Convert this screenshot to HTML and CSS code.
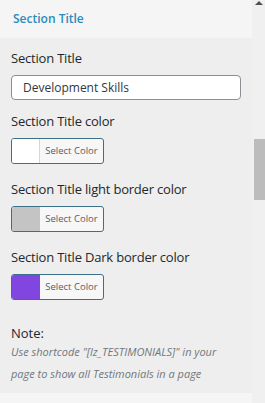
FILE: index.html
```html
<!DOCTYPE html>
<html lang="en">
<head>
  <meta charset="UTF-8" />
  <meta name="viewport" content="width=device-width, initial-scale=1.0"/>
  <title>Section Title</title>
  <link rel="stylesheet" href="styles.css">
</head>
<body>
  <div class="frame">
    <div class="panel">
      <div class="panel-head">Section Title</div>

      <div class="panel-body">
        <label class="field-label">Section Title</label>
        <input class="text-input" type="text" value="Development Skills">

        <label class="field-label">Section Title color</label>
        <button class="color-btn"><span class="swatch swatch-white"></span><span class="color-text">Select Color</span></button>

        <label class="field-label">Section Title light border color</label>
        <button class="color-btn"><span class="swatch swatch-gray"></span><span class="color-text">Select Color</span></button>

        <label class="field-label">Section Title Dark border color</label>
        <button class="color-btn"><span class="swatch swatch-purple"></span><span class="color-text">Select Color</span></button>

        <div class="note-title">Note:</div>
        <p class="note">Use shortcode "[lz_TESTIMONIALS]" in your page to show all Testimonials in a page</p>
      </div>

      <div class="panel-next"></div>
    </div>

    <div class="scrollbar">
      <span class="arrow-up"></span>
      <span class="thumb"></span>
    </div>
  </div>
</body>
</html>
```

FILE: styles.css
```css
* { box-sizing: border-box; margin: 0; padding: 0; }

body {
  font-family: 'Open Sans', 'Noto Sans', sans-serif;
  background: #eeeeee;
  color: #23282d;
  width: 265px;
  height: 403px;
  overflow: hidden;
}

.frame {
  display: flex;
  height: 403px;
}

.panel {
  width: 252px;
  display: flex;
  flex-direction: column;
}

.panel-head {
  height: 38px;
  background: #f5f5f5;
  color: #2a8bbd;
  font-size: 12px;
  font-weight: 600;
  padding: 10px 0 0 13px;
}

.panel-body {
  padding: 11px 11px 0 11px;
  display: flex;
  flex-direction: column;
  align-items: flex-start;
  height: 355px;
}

.field-label {
  font-size: 13px;
  line-height: 18px;
  letter-spacing: -0.2px;
  margin-bottom: 8px;
}

.text-input {
  width: 230px;
  height: 25px;
  border: 1px solid #8c8f94;
  border-radius: 4px;
  background: #fff;
  font-family: inherit;
  font-size: 12px;
  color: #32373c;
  padding: 0 11px;
  margin-bottom: 12px;
}

.color-btn {
  display: flex;
  width: 93px;
  height: 26px;
  border: 1px solid #3b6f8a;
  border-radius: 3px;
  background: #f7f7f7;
  overflow: hidden;
  margin-bottom: 16px;
  font-family: inherit;
}

.swatch {
  width: 28px;
  height: 100%;
  border-right: 1px solid #d6d6d6;
}

.swatch-white { background: #ffffff; }
.swatch-gray { background: #c4c4c4; border-right-color: #c4c4c4; }
.swatch-purple { background: #8146e0; border-right-color: #8146e0; }

.color-text {
  flex: 1;
  font-size: 9.5px;
  color: #555d66;
  line-height: 24px;
  text-align: center;
}

.note-title {
  margin-top: 9px;
  font-size: 13px;
  line-height: 16px;
}

.note {
  font-size: 11px;
  font-style: italic;
  line-height: 22px;
  color: #72777c;
}

.panel-next {
  flex: 1;
  background: #f5f5f5;
}

.scrollbar {
  position: relative;
  flex: 1;
  background: #f0f0f0;
}

.arrow-up {
  position: absolute;
  top: 1px;
  left: 3px;
  width: 0;
  height: 0;
  border-left: 4px solid transparent;
  border-right: 4px solid transparent;
  border-bottom: 4px solid #505050;
}

.thumb {
  position: absolute;
  top: 139px;
  left: 2px;
  width: 11px;
  height: 61px;
  background: #bcbcbc;
}
```
